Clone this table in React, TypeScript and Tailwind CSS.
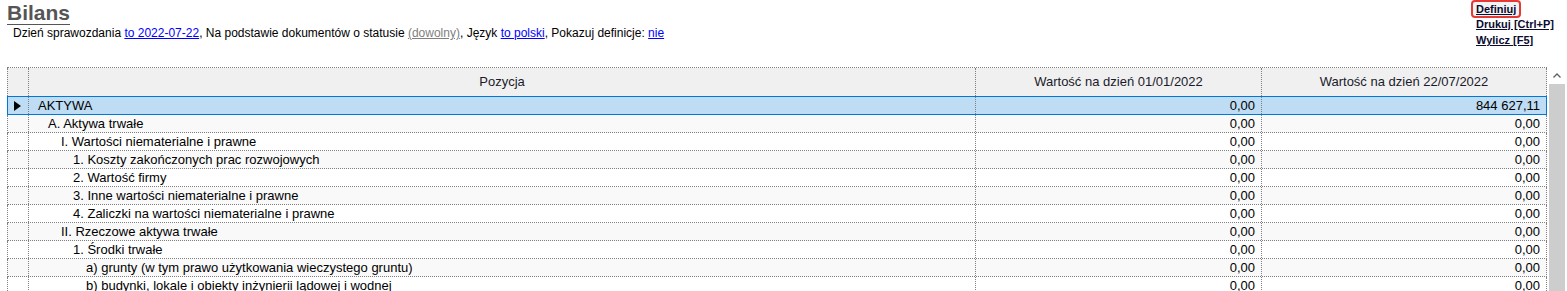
type Row = { label: string; level: number; v1: string; v2: string };

const rows: Row[] = [
  { label: "AKTYWA", level: 0, v1: "0,00", v2: "844 627,11" },
  { label: "A. Aktywa trwałe", level: 1, v1: "0,00", v2: "0,00" },
  { label: "I. Wartości niematerialne i prawne", level: 2, v1: "0,00", v2: "0,00" },
  { label: "1. Koszty zakończonych prac rozwojowych", level: 3, v1: "0,00", v2: "0,00" },
  { label: "2. Wartość firmy", level: 3, v1: "0,00", v2: "0,00" },
  { label: "3. Inne wartości niematerialne i prawne", level: 3, v1: "0,00", v2: "0,00" },
  { label: "4. Zaliczki na wartości niematerialne i prawne", level: 3, v1: "0,00", v2: "0,00" },
  { label: "II. Rzeczowe aktywa trwałe", level: 2, v1: "0,00", v2: "0,00" },
  { label: "1. Środki trwałe", level: 3, v1: "0,00", v2: "0,00" },
  { label: "a) grunty (w tym prawo użytkowania wieczystego gruntu)", level: 4, v1: "0,00", v2: "0,00" },
  { label: "b) budynki, lokale i obiekty inżynierii lądowej i wodnej", level: 4, v1: "0,00", v2: "0,00" },
];

const indent = ["pl-[9px]", "pl-[19px]", "pl-[32px]", "pl-[44px]", "pl-[57px]"];

const cols = "grid grid-cols-[21px_947px_286px_284px]";
const dotR = "border-r border-dotted border-[#808080]";

const App = () => {
  return (
    <div className="h-[291px] overflow-hidden bg-white text-[12px] text-black font-['Liberation_Sans',Arial,sans-serif]">
      {/* Header */}
      <div className="flex h-[67px] justify-between">
        <div>
          <div className="pl-[7px] pt-[1px]">
            <span className="inline-block border-b border-[#555555] text-[21px] font-bold leading-[23px] text-[#555555]">
              Bilans
            </span>
          </div>
          <div className="mt-[1px] pl-[13px] leading-[14px]">
            Dzień sprawozdania{" "}
            <a href="#" className="text-[#0000ff] underline">to 2022-07-22</a>, Na podstawie dokumentów o statusie{" "}
            <a href="#" className="text-[#808080] underline">(dowolny)</a>, Język{" "}
            <a href="#" className="text-[#0000ff] underline">to polski</a>, Pokazuj definicje:{" "}
            <a href="#" className="text-[#0000ff] underline">nie</a>
          </div>
        </div>
        <div className="w-[91px] text-[11px] font-bold text-[#0b0b30]">
          <div className="-mb-[2px]">
            <a
              href="#"
              className="-ml-[5px] inline-block rounded-[4px] border-2 border-[#e53935] bg-[#f3f3f3] px-[3px] leading-[14px] underline"
            >
              Definiuj
            </a>
          </div>
          <div className="leading-[16px]">
            <a href="#" className="underline">Drukuj [Ctrl+P]</a>
          </div>
          <div className="leading-[16px]">
            <a href="#" className="underline">Wylicz [F5]</a>
          </div>
        </div>
      </div>

      {/* Grid */}
      <div className="flex text-[13px]">
        <div className="ml-[7px] w-[1540px] border-t border-dotted border-[#808080]">
          <div className={`${cols} h-[28px] border-x border-dotted border-[#808080] bg-[#f0f0f0] text-[#1a1a2a]`}>
            <div className={dotR} />
            <div className={`${dotR} flex items-center justify-center`}>Pozycja</div>
            <div className={`${dotR} flex items-center justify-center`}>Wartość na dzień 01/01/2022</div>
            <div className="flex items-center justify-center">Wartość na dzień 22/07/2022</div>
          </div>
          {rows.map((r, i) => {
            const selected = i === 0;
            return (
              <div
                key={i}
                className={
                  selected
                    ? `${cols} h-[19px] border border-[#0078d7] bg-[#bedcf4] leading-[17px]`
                    : `${cols} h-[18px] border-x border-b border-dotted border-[#808080] leading-[17px] ${
                        i % 2 === 1 ? "bg-[#f9f9f9]" : "bg-white"
                      }`
                }
              >
                <div className={`${dotR} flex items-center justify-center`}>
                  {selected && (
                    <svg width="7" height="10" viewBox="0 0 7 10" className="ml-[-1px]">
                      <polygon points="0,0 7,5 0,10" fill="#000" />
                    </svg>
                  )}
                </div>
                <div className={`${dotR} ${indent[r.level]} whitespace-nowrap`}>{r.label}</div>
                <div className={`${dotR} pr-[6px] text-right`}>{r.v1}</div>
                <div className="pr-[6px] text-right">{r.v2}</div>
              </div>
            );
          })}
        </div>

        {/* Scrollbar */}
        <div className="flex w-[20px] flex-col bg-white">
          <div className="flex h-[17px] items-center justify-center">
            <svg width="8" height="5" viewBox="0 0 8 5">
              <polyline points="0.5,4.5 4,1 7.5,4.5" fill="none" stroke="#606060" strokeWidth="1.3" />
            </svg>
          </div>
          <div className="ml-[2px] h-[240px] w-[16px] bg-[#cdcdcd]" />
        </div>
      </div>
    </div>
  );
};

export default App;
